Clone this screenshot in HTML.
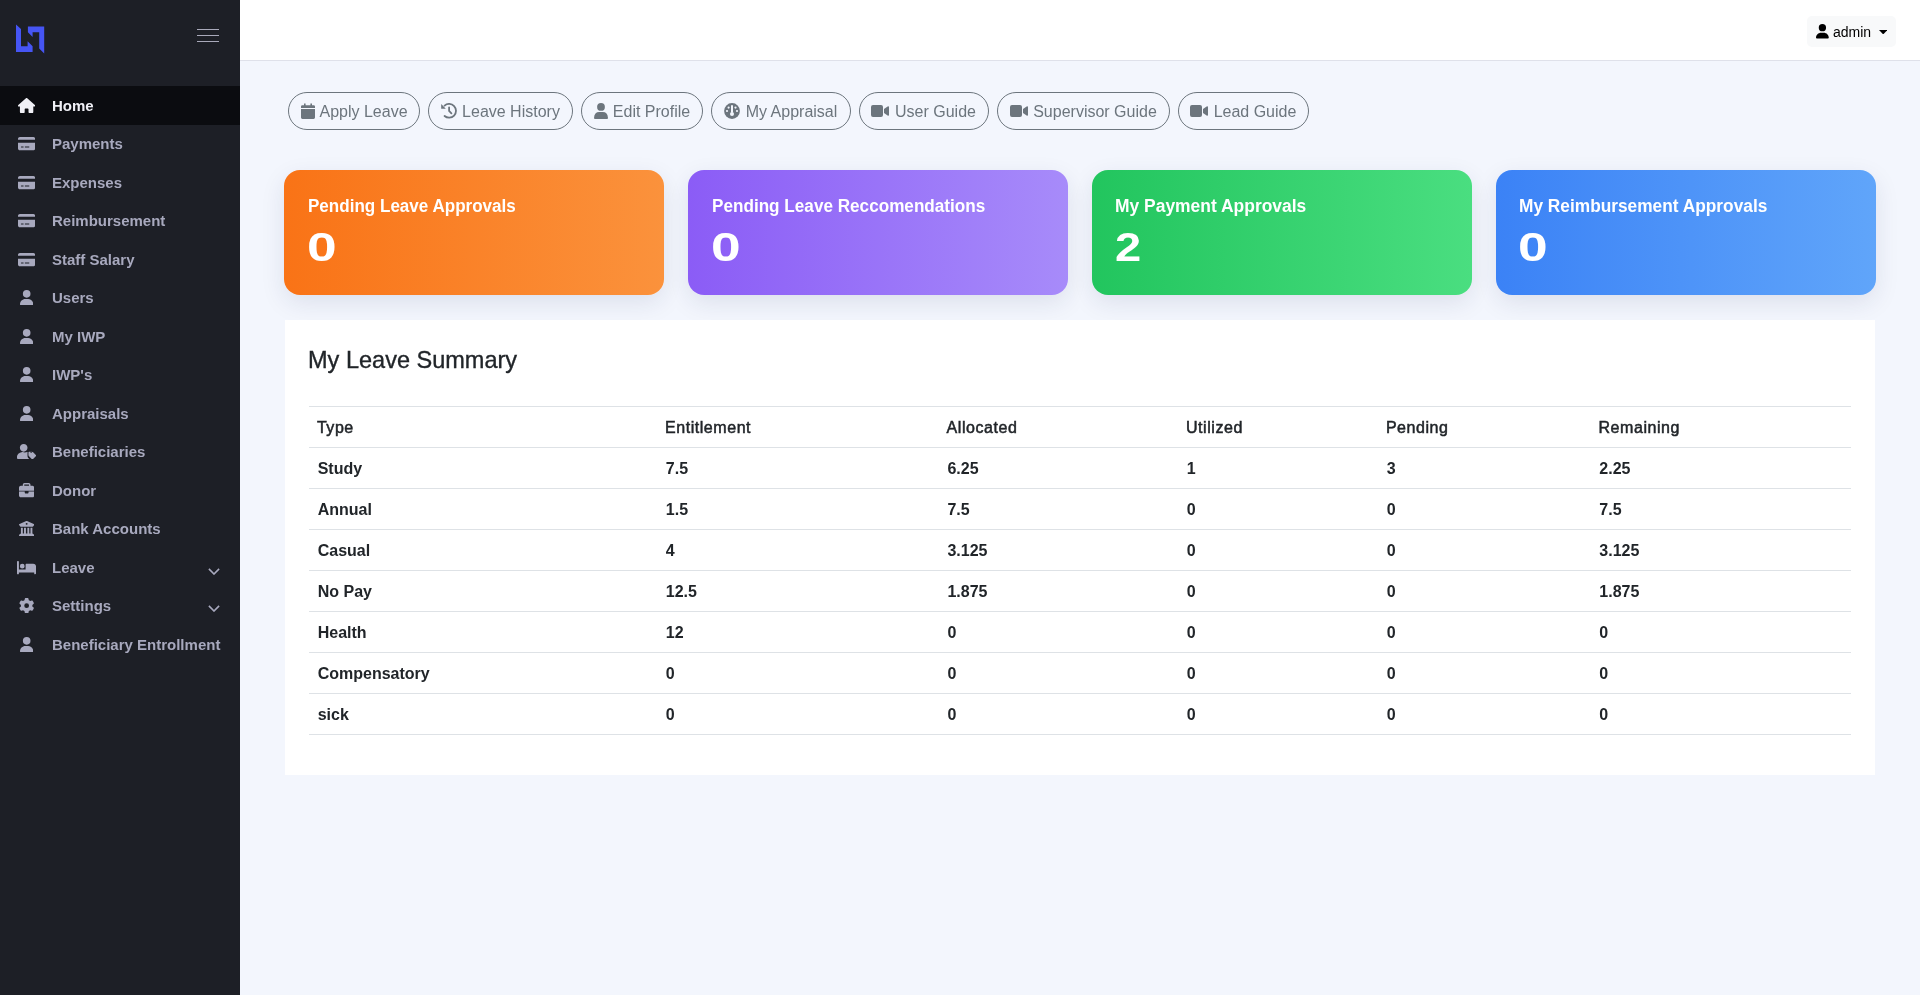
<!DOCTYPE html>
<html><head><meta charset="utf-8"><title>Dashboard</title>
<style>
*{box-sizing:border-box;margin:0;padding:0}
html,body{width:1920px;height:995px;overflow:hidden}
body{background:#f3f6fd;font-family:"Liberation Sans",sans-serif;position:relative;color:#212529}
.sb{position:absolute;left:0;top:0;width:240px;height:995px;background:#1d1f26}
.logo{position:absolute;left:16px;top:24px}
.hb{position:absolute;left:197px;width:22px;height:1.2px;background:#a9a9ba}
.mi{position:absolute;left:0;width:240px;height:38.5px;color:#a8a9be;font-weight:bold;font-size:15px}
.mi.act{background:#0b0c10;color:#f0f0f6}
.mi span{position:absolute;left:52px;top:0.5px;line-height:38.5px;white-space:nowrap}
.mi .ic{position:absolute}
.mi .chev{position:absolute;left:208px;top:20px;width:12px;height:7px}
.hd{position:absolute;left:240px;top:0;width:1680px;height:61px;background:#fff;border-bottom:1px solid #dfe1ea}
.adm{position:absolute;left:1807px;top:16px;width:89px;height:31px;background:#f8f9fa;border-radius:5px;font-size:14px;color:#000}
.adm span{position:absolute;left:26px;top:1px;line-height:31px}
.btn{position:absolute;top:92px;height:38px;border:1px solid #6c757d;border-radius:19px;color:#6c757d;font-size:16px;display:flex;align-items:center;justify-content:center;white-space:nowrap}
.btn .bi{margin-right:5px;flex:none;position:relative;left:0.5px}
.btn span{position:relative;top:1px}
.card{position:absolute;top:170px;width:380px;height:125px;border-radius:16px;box-shadow:0 8px 24px rgba(30,40,90,.10);color:#fff;font-weight:bold}
.ct{position:absolute;left:24px;top:24px;transform-origin:0 0;font-size:18px;line-height:24px;white-space:nowrap}
.cn{position:absolute;left:23.5px;top:52.6px;font-size:41px;line-height:48px;transform:scaleX(1.3);transform-origin:0 0}
.panel{position:absolute;left:285px;top:320px;width:1590px;height:455px;background:#fff}
.ptitle{-webkit-text-stroke:0.35px #212529;position:absolute;left:22.5px;top:22px;transform:scaleX(0.98);transform-origin:0 0;font-size:24px;line-height:36px;color:#212529}
.tbl{position:absolute;left:24px;top:86px;width:1542px;height:329px;border-top:1px solid #dee2e6}
.tr{position:absolute;left:0;width:1542px;height:41px;border-bottom:1px solid #dee2e6}
.tr span{position:absolute;top:1px;line-height:40px;font-size:16px;white-space:nowrap}
.th span{font-weight:normal;-webkit-text-stroke:0.5px #212529;letter-spacing:0.55px;margin-left:-0.8px}
.td span{font-weight:bold}
</style></head><body><div id="wrap" style="position:absolute;left:0;top:0;width:1920px;height:995px;will-change:transform">
<div class="sb">
<svg class="logo" viewBox="0 0 30 30" width="30" height="30"><path fill="#4655f4" d="M0 0.4 L5 5.1 L5 22.25 L11.6 22.25 L11.6 17.25 L16.6 22.25 L16.6 27.9 L0 27.9Z M11.9 2.6 L28.2 2.6 L28.2 29.4 L23.2 24.4 L23.2 8.2 L16.6 8.2 L16.6 12.9 L11.9 8.2Z"/></svg>
<div class="hb" style="top:29px"></div><div class="hb" style="top:35px"></div><div class="hb" style="top:41px"></div>
<div class="mi act" style="top:86.0px"><svg class="ic" style="left:17.59px;top:11.6px;width:17.21px;height:15.3px" viewBox="0 0 576 512" fill="#f0f0f6"><path d="M575.8 255.5c0 18-15 32.1-32 32.1h-32l.7 160.2c0 2.7-.2 5.4-.5 8.1V472c0 22.1-17.9 40-40 40H456c-1.1 0-2.2 0-3.3-.1c-1.4 .1-2.8 .1-4.2 .1H416 392c-22.1 0-40-17.9-40-40V448 384c0-17.7-14.3-32-32-32H256c-17.7 0-32 14.3-32 32v64 24c0 22.1-17.9 40-40 40H160 128.1c-1.5 0-3-.1-4.5-.2c-1.2 .1-2.4 .2-3.6 .2H104c-22.1 0-40-17.9-40-40V360c0-.9 0-1.9 .1-2.8V287.6H32c-18 0-32-14-32-32.1c0-9 3-17 10-24L266.4 8c7-7 15-8 22-8s15 2 21 7L564.8 231.5c8 7 12 15 11 24z"/></svg><span>Home</span></div>
<div class="mi" style="top:124.5px"><svg class="ic" style="left:17.59px;top:11.6px;width:17.21px;height:15.3px" viewBox="0 0 576 512" fill="#a8a9be"><path d="M64 32C28.7 32 0 60.7 0 96v32H576V96c0-35.3-28.7-64-64-64H64zM576 224H0V416c0 35.3 28.7 64 64 64H512c35.3 0 64-28.7 64-64V224zM112 352h64c8.8 0 16 7.2 16 16s-7.2 16-16 16H112c-8.8 0-16-7.2-16-16s7.2-16 16-16zm112 16c0-8.8 7.2-16 16-16H368c8.8 0 16 7.2 16 16s-7.2 16-16 16H240c-8.8 0-16-7.2-16-16z"/></svg><span>Payments</span></div>
<div class="mi" style="top:163.0px"><svg class="ic" style="left:17.59px;top:11.6px;width:17.21px;height:15.3px" viewBox="0 0 576 512" fill="#a8a9be"><path d="M64 32C28.7 32 0 60.7 0 96v32H576V96c0-35.3-28.7-64-64-64H64zM576 224H0V416c0 35.3 28.7 64 64 64H512c35.3 0 64-28.7 64-64V224zM112 352h64c8.8 0 16 7.2 16 16s-7.2 16-16 16H112c-8.8 0-16-7.2-16-16s7.2-16 16-16zm112 16c0-8.8 7.2-16 16-16H368c8.8 0 16 7.2 16 16s-7.2 16-16 16H240c-8.8 0-16-7.2-16-16z"/></svg><span>Expenses</span></div>
<div class="mi" style="top:201.5px"><svg class="ic" style="left:17.59px;top:11.6px;width:17.21px;height:15.3px" viewBox="0 0 576 512" fill="#a8a9be"><path d="M64 32C28.7 32 0 60.7 0 96v32H576V96c0-35.3-28.7-64-64-64H64zM576 224H0V416c0 35.3 28.7 64 64 64H512c35.3 0 64-28.7 64-64V224zM112 352h64c8.8 0 16 7.2 16 16s-7.2 16-16 16H112c-8.8 0-16-7.2-16-16s7.2-16 16-16zm112 16c0-8.8 7.2-16 16-16H368c8.8 0 16 7.2 16 16s-7.2 16-16 16H240c-8.8 0-16-7.2-16-16z"/></svg><span>Reimbursement</span></div>
<div class="mi" style="top:240.0px"><svg class="ic" style="left:17.59px;top:11.6px;width:17.21px;height:15.3px" viewBox="0 0 576 512" fill="#a8a9be"><path d="M64 32C28.7 32 0 60.7 0 96v32H576V96c0-35.3-28.7-64-64-64H64zM576 224H0V416c0 35.3 28.7 64 64 64H512c35.3 0 64-28.7 64-64V224zM112 352h64c8.8 0 16 7.2 16 16s-7.2 16-16 16H112c-8.8 0-16-7.2-16-16s7.2-16 16-16zm112 16c0-8.8 7.2-16 16-16H368c8.8 0 16 7.2 16 16s-7.2 16-16 16H240c-8.8 0-16-7.2-16-16z"/></svg><span>Staff Salary</span></div>
<div class="mi" style="top:278.5px"><svg class="ic" style="left:19.51px;top:11.6px;width:13.39px;height:15.3px" viewBox="0 0 448 512" fill="#a8a9be"><path d="M224 256A128 128 0 1 0 224 0a128 128 0 1 0 0 256zm-45.7 48C79.8 304 0 383.8 0 482.3C0 498.7 13.3 512 29.7 512H418.3c16.4 0 29.7-13.3 29.7-29.7C448 383.8 368.2 304 269.7 304H178.3z"/></svg><span>Users</span></div>
<div class="mi" style="top:317.0px"><svg class="ic" style="left:19.51px;top:11.6px;width:13.39px;height:15.3px" viewBox="0 0 448 512" fill="#a8a9be"><path d="M224 256A128 128 0 1 0 224 0a128 128 0 1 0 0 256zm-45.7 48C79.8 304 0 383.8 0 482.3C0 498.7 13.3 512 29.7 512H418.3c16.4 0 29.7-13.3 29.7-29.7C448 383.8 368.2 304 269.7 304H178.3z"/></svg><span>My IWP</span></div>
<div class="mi" style="top:355.5px"><svg class="ic" style="left:19.51px;top:11.6px;width:13.39px;height:15.3px" viewBox="0 0 448 512" fill="#a8a9be"><path d="M224 256A128 128 0 1 0 224 0a128 128 0 1 0 0 256zm-45.7 48C79.8 304 0 383.8 0 482.3C0 498.7 13.3 512 29.7 512H418.3c16.4 0 29.7-13.3 29.7-29.7C448 383.8 368.2 304 269.7 304H178.3z"/></svg><span>IWP's</span></div>
<div class="mi" style="top:394.0px"><svg class="ic" style="left:19.51px;top:11.6px;width:13.39px;height:15.3px" viewBox="0 0 448 512" fill="#a8a9be"><path d="M224 256A128 128 0 1 0 224 0a128 128 0 1 0 0 256zm-45.7 48C79.8 304 0 383.8 0 482.3C0 498.7 13.3 512 29.7 512H418.3c16.4 0 29.7-13.3 29.7-29.7C448 383.8 368.2 304 269.7 304H178.3z"/></svg><span>Appraisals</span></div>
<div class="mi" style="top:432.5px"><svg class="ic" style="left:16.64px;top:11.6px;width:19.12px;height:15.3px" viewBox="0 0 640 512" fill="#a8a9be"><path d="M630.6 364.9l-90.3-90.2c-12-12-28.3-18.7-45.3-18.7h-79.3c-17.7 0-32 14.3-32 32v79.2c0 17 6.7 33.2 18.7 45.2l90.3 90.2c12.5 12.5 32.8 12.5 45.3 0l92.5-92.5c12.6-12.4 12.6-32.7.1-45.2zm-157.7-62.9c-13.3 0-24-10.7-24-24s10.7-24 24-24 24 10.7 24 24c0 13.2-10.7 24-24 24zm-248.9-46c70.7 0 128-57.3 128-128S294.7 0 224 0 96 57.3 96 128s57.3 128 128 128zm127.9 111.3v-79.2c0-8.3 1.6-16.2 4.4-23.5-.6 0-1.2-.2-1.8-.2h-16.7c-22.2 10.2-46.9 16-72.9 16s-50.6-5.8-72.9-16h-16.7C60.2 288 0 348.2 0 422.4V464c0 26.5 21.5 48 48 48h352c6.5 0 12.6-1.3 18.2-3.6l-43.5-43.5c-14.3-14.3-22.5-33.3-22.5-53.6z"/></svg><span>Beneficiaries</span></div>
<div class="mi" style="top:471.0px"><svg class="ic" style="left:18.55px;top:11.6px;width:15.30px;height:15.3px" viewBox="0 0 512 512" fill="#a8a9be"><path d="M184 48H328c4.4 0 8 3.6 8 8V96H176V56c0-4.4 3.6-8 8-8zm-56 8V96H64C28.7 96 0 124.7 0 160v96H192 320 512V160c0-35.3-28.7-64-64-64H384V56c0-30.9-25.1-56-56-56H184c-30.9 0-56 25.1-56 56zM512 288H320v32c0 17.7-14.3 32-32 32H224c-17.7 0-32-14.3-32-32V288H0V416c0 35.3 28.7 64 64 64H448c35.3 0 64-28.7 64-64V288z"/></svg><span>Donor</span></div>
<div class="mi" style="top:509.5px"><svg class="ic" style="left:18.55px;top:11.6px;width:15.30px;height:15.3px" viewBox="0 0 512 512" fill="#a8a9be"><path d="M243.4 2.6l-224 96c-14 6-21.8 21-18.7 35.8S16.8 160 32 160v8c0 13.3 10.7 24 24 24H456c13.3 0 24-10.7 24-24v-8c15.2 0 28.3-10.7 31.3-25.6s-4.8-29.9-18.7-35.8l-224-96c-8-3.4-17.2-3.4-25.2 0zM128 224H64V420.3c-.6 .3-1.2 .7-1.8 1.1l-48 32c-11.7 7.8-17 22.4-12.9 35.9S17.9 512 32 512H480c14.1 0 26.5-9.2 30.6-22.7s-1.1-28.1-12.9-35.9l-48-32c-.6-.4-1.2-.7-1.8-1.1V224H384V416H344V224H280V416H232V224H168V416H128V224zM256 64a32 32 0 1 1 0 64 32 32 0 1 1 0-64z"/></svg><span>Bank Accounts</span></div>
<div class="mi" style="top:548.0px"><svg class="ic" style="left:16.64px;top:11.6px;width:19.12px;height:15.3px" viewBox="0 0 640 512" fill="#a8a9be"><path d="M32 32c17.7 0 32 14.3 32 32V320H288V160c0-17.7 14.3-32 32-32H544c53 0 96 43 96 96V448c0 17.7-14.3 32-32 32s-32-14.3-32-32V416H352 320 64v32c0 17.7-14.3 32-32 32s-32-14.3-32-32V64C0 46.3 14.3 32 32 32zm144 96a80 80 0 1 1 0 160 80 80 0 1 1 0-160z"/></svg><span>Leave</span><svg class="chev" style="top:19.6px" viewBox="0 0 12 7"><path d="M0.9 0.9 L6 6 L11.1 0.9" fill="none" stroke="#a8a9be" stroke-width="1.6"/></svg></div>
<div class="mi" style="top:586.5px"><svg class="ic" style="left:18.55px;top:11.6px;width:15.30px;height:15.3px" viewBox="0 0 512 512" fill="#a8a9be"><path d="M495.9 166.6c3.2 8.7 .5 18.4-6.4 24.6l-43.3 39.4c1.1 8.3 1.7 16.8 1.7 25.4s-.6 17.1-1.7 25.4l43.3 39.4c6.9 6.2 9.6 15.9 6.4 24.6c-4.4 11.9-9.7 23.3-15.8 34.3l-4.7 8.1c-6.6 11-14 21.4-22.1 31.2c-5.9 7.2-15.7 9.6-24.5 6.8l-55.7-17.7c-13.4 10.3-28.2 18.9-44 25.4l-12.5 57.1c-2 9.1-9 16.3-18.2 17.8c-13.8 2.3-28 3.5-42.5 3.5s-28.7-1.2-42.5-3.5c-9.2-1.5-16.2-8.7-18.2-17.8l-12.5-57.1c-15.8-6.5-30.6-15.1-44-25.4L83.1 425.9c-8.8 2.8-18.6 .3-24.5-6.8c-8.1-9.8-15.5-20.2-22.1-31.2l-4.7-8.1c-6.1-11-11.4-22.4-15.8-34.3c-3.2-8.7-.5-18.4 6.4-24.6l43.3-39.4C64.6 273.1 64 264.6 64 256s.6-17.1 1.7-25.4L22.4 191.2c-6.9-6.2-9.6-15.9-6.4-24.6c4.4-11.9 9.7-23.3 15.8-34.3l4.7-8.1c6.6-11 14-21.4 22.1-31.2c5.9-7.2 15.7-9.6 24.5-6.8l55.7 17.7c13.4-10.3 28.2-18.9 44-25.4l12.5-57.1c2-9.1 9-16.3 18.2-17.8C227.3 1.2 241.5 0 256 0s28.7 1.2 42.5 3.5c9.2 1.5 16.2 8.7 18.2 17.8l12.5 57.1c15.8 6.5 30.6 15.1 44 25.4l55.7-17.7c8.8-2.8 18.6-.3 24.5 6.8c8.1 9.8 15.5 20.2 22.1 31.2l4.7 8.1c6.1 11 11.4 22.4 15.8 34.3zM256 336a80 80 0 1 0 0-160 80 80 0 1 0 0 160z"/></svg><span>Settings</span><svg class="chev" style="top:18.8px" viewBox="0 0 12 7"><path d="M0.9 0.9 L6 6 L11.1 0.9" fill="none" stroke="#a8a9be" stroke-width="1.6"/></svg></div>
<div class="mi" style="top:625.0px"><svg class="ic" style="left:19.51px;top:11.6px;width:13.39px;height:15.3px" viewBox="0 0 448 512" fill="#a8a9be"><path d="M224 256A128 128 0 1 0 224 0a128 128 0 1 0 0 256zm-45.7 48C79.8 304 0 383.8 0 482.3C0 498.7 13.3 512 29.7 512H418.3c16.4 0 29.7-13.3 29.7-29.7C448 383.8 368.2 304 269.7 304H178.3z"/></svg><span>Beneficiary Entrollment</span></div>
</div>
<div class="hd">
</div>
<div class="adm"><svg style="position:absolute;left:9.1px;top:8.4px" width="12.8" height="14.6" viewBox="0 0 448 512"><path d="M224 256A128 128 0 1 0 224 0a128 128 0 1 0 0 256zm-45.7 48C79.8 304 0 383.8 0 482.3C0 498.7 13.3 512 29.7 512H418.3c16.4 0 29.7-13.3 29.7-29.7C448 383.8 368.2 304 269.7 304H178.3z"/></svg><span>admin</span><svg style="position:absolute;left:72px;top:14px" width="8.4" height="4.4" viewBox="0 0 8.4 4.4"><path d="M0 0 L8.4 0 L4.2 4.4Z"/></svg></div>
<div class="btn" style="left:288px;width:132px"><svg class="bi" viewBox="0 0 14 16" style="width:14px;height:16px"><path d="M3 0.5h1.6v2H3z M9.4 0.5h1.6v2H9.4z M0 3.6 Q0 2.2 1.4 2.2 L12.6 2.2 Q14 2.2 14 3.6 L14 5 0 5Z M0 6 L14 6 14 14.6 Q14 16 12.6 16 L1.4 16 Q0 16 0 14.6Z" fill="#6c757d"/></svg><span>Apply Leave</span></div>
<div class="btn" style="left:428px;width:145px"><svg class="bi" viewBox="0 0 16 16" style="width:16px;height:16px;left:0px"><path d="M3.57 2.59 A6.9 6.9 0 1 1 3.57 13.0" fill="none" stroke="#6c757d" stroke-width="1.8" stroke-linecap="round"/><path d="M0.2 1.1 L0.2 5.7 L4.8 5.7Z" fill="#6c757d"/><path d="M8.1 4.3 L8.1 8 L10.4 10.3" fill="none" stroke="#6c757d" stroke-width="1.8" stroke-linecap="round"/></svg><span>Leave History</span></div>
<div class="btn" style="left:581px;width:122px"><svg class="bi" viewBox="0 0 14 16" style="width:14px;height:16px"><circle cx="7" cy="3.9" r="3.9" fill="#6c757d"/><path d="M0 15 Q0.4 9.1 5.2 9.1 L8.8 9.1 Q13.6 9.1 14 15 Q14 16 13 16 L1 16 Q0 16 0 15Z" fill="#6c757d"/></svg><span>Edit Profile</span></div>
<div class="btn" style="left:711px;width:140px"><svg class="bi" viewBox="0 0 16 16" style="width:16px;height:16px;left:-0.8px"><circle cx="8" cy="8" r="7.9" fill="#6c757d"/><g fill="#f3f6fd"><circle cx="4.6" cy="4.6" r="1.1"/><circle cx="11.5" cy="4.6" r="1.1"/><circle cx="3.0" cy="8.0" r="1.1"/><circle cx="13.0" cy="8.0" r="1.1"/><path d="M7 2.2 L9 2.2 L9 9.6 L7 9.6Z"/><circle cx="8" cy="11" r="2"/></g></svg><span>My Appraisal</span></div>
<div class="btn" style="left:859px;width:130px"><svg class="bi" viewBox="0 0 18 12" style="width:18px;height:12px;left:-0.6px"><path d="M0 2 Q0 0 2 0 L10 0 Q12 0 12 2 L12 10 Q12 12 10 12 L2 12 Q0 12 0 10Z M13 4 L16.6 1.5 Q18 0.8 18 2.3 L18 9.7 Q18 11.2 16.6 10.5 L13 8Z" fill="#6c757d"/></svg><span>User Guide</span></div>
<div class="btn" style="left:997px;width:173px"><svg class="bi" viewBox="0 0 18 12" style="width:18px;height:12px;left:-0.6px"><path d="M0 2 Q0 0 2 0 L10 0 Q12 0 12 2 L12 10 Q12 12 10 12 L2 12 Q0 12 0 10Z M13 4 L16.6 1.5 Q18 0.8 18 2.3 L18 9.7 Q18 11.2 16.6 10.5 L13 8Z" fill="#6c757d"/></svg><span>Supervisor Guide</span></div>
<div class="btn" style="left:1178px;width:131px"><svg class="bi" viewBox="0 0 18 12" style="width:18px;height:12px;left:-0.6px"><path d="M0 2 Q0 0 2 0 L10 0 Q12 0 12 2 L12 10 Q12 12 10 12 L2 12 Q0 12 0 10Z M13 4 L16.6 1.5 Q18 0.8 18 2.3 L18 9.7 Q18 11.2 16.6 10.5 L13 8Z" fill="#6c757d"/></svg><span>Lead Guide</span></div>
<div class="card" style="left:284px;background:linear-gradient(90deg,#f97316,#fb923c)"><div class="ct" style="transform:scaleX(0.947);left:24px">Pending Leave Approvals</div><div class="cn" style="left:22.5px;transform:scaleX(1.3)">0</div></div>
<div class="card" style="left:688px;background:linear-gradient(90deg,#8b5cf6,#a78bfa)"><div class="ct" style="transform:scaleX(0.952);left:24px">Pending Leave Reccomendations</div><div class="cn" style="left:22.5px;transform:scaleX(1.3)">0</div></div>
<div class="card" style="left:1092px;background:linear-gradient(90deg,#22c55e,#4ade80)"><div class="ct" style="transform:scaleX(0.969);left:22.5px">My Payment Approvals</div><div class="cn" style="left:22.5px;transform:scaleX(1.15)">2</div></div>
<div class="card" style="left:1496px;background:linear-gradient(90deg,#3b82f6,#60a5fa)"><div class="ct" style="transform:scaleX(0.961);left:22.5px">My Reimbursement Approvals</div><div class="cn" style="left:22px;transform:scaleX(1.3)">0</div></div>
<div class="panel">
<div class="ptitle">My Leave Summary</div>
<div class="tbl">
<div class="tr th" style="top:0px"><span style="left:8.699999999999989px">Type</span><span style="left:356.79999999999995px">Entitlement</span><span style="left:638.4px">Allocated</span><span style="left:877.8px">Utilized</span><span style="left:1077.7px">Pending</span><span style="left:1290.3px">Remaining</span></div>
<div class="tr td" style="top:41px"><span style="left:8.699999999999989px">Study</span><span style="left:356.79999999999995px">7.5</span><span style="left:638.4px">6.25</span><span style="left:877.8px">1</span><span style="left:1077.7px">3</span><span style="left:1290.3px">2.25</span></div>
<div class="tr td" style="top:82px"><span style="left:8.699999999999989px">Annual</span><span style="left:356.79999999999995px">1.5</span><span style="left:638.4px">7.5</span><span style="left:877.8px">0</span><span style="left:1077.7px">0</span><span style="left:1290.3px">7.5</span></div>
<div class="tr td" style="top:123px"><span style="left:8.699999999999989px">Casual</span><span style="left:356.79999999999995px">4</span><span style="left:638.4px">3.125</span><span style="left:877.8px">0</span><span style="left:1077.7px">0</span><span style="left:1290.3px">3.125</span></div>
<div class="tr td" style="top:164px"><span style="left:8.699999999999989px">No Pay</span><span style="left:356.79999999999995px">12.5</span><span style="left:638.4px">1.875</span><span style="left:877.8px">0</span><span style="left:1077.7px">0</span><span style="left:1290.3px">1.875</span></div>
<div class="tr td" style="top:205px"><span style="left:8.699999999999989px">Health</span><span style="left:356.79999999999995px">12</span><span style="left:638.4px">0</span><span style="left:877.8px">0</span><span style="left:1077.7px">0</span><span style="left:1290.3px">0</span></div>
<div class="tr td" style="top:246px"><span style="left:8.699999999999989px">Compensatory</span><span style="left:356.79999999999995px">0</span><span style="left:638.4px">0</span><span style="left:877.8px">0</span><span style="left:1077.7px">0</span><span style="left:1290.3px">0</span></div>
<div class="tr td" style="top:287px"><span style="left:8.699999999999989px">sick</span><span style="left:356.79999999999995px">0</span><span style="left:638.4px">0</span><span style="left:877.8px">0</span><span style="left:1077.7px">0</span><span style="left:1290.3px">0</span></div>
</div>
</div>
</div></body></html>
